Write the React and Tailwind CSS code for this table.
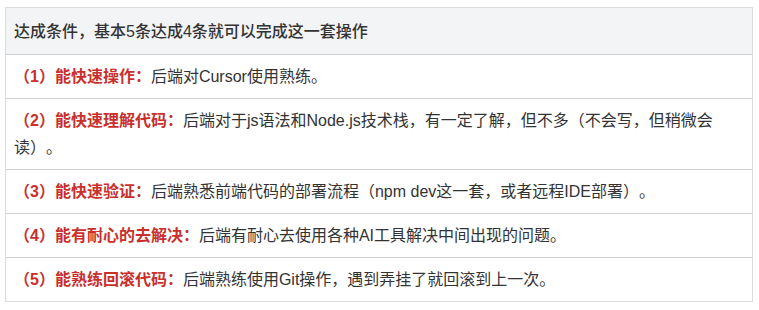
import React from 'react';

const rows = [
  { label: '（1）能快速操作：', text: '后端对Cursor使用熟练。' },
  { label: '（2）能快速理解代码：', text: '后端对于js语法和Node.js技术栈，有一定了解，但不多（不会写，但稍微会读）。' },
  { label: '（3）能快速验证：', text: '后端熟悉前端代码的部署流程（npm dev这一套，或者远程IDE部署）。' },
  { label: '（4）能有耐心的去解决：', text: '后端有耐心去使用各种AI工具解决中间出现的问题。' },
  { label: '（5）能熟练回滚代码：', text: '后端熟练使用Git操作，遇到弄挂了就回滚到上一次。' },
];

export default function App() {
  return (
    <div
      className="w-[759px] h-[310px] bg-white pt-[7px] pl-[5px] [text-spacing-trim:space-all]"
      style={{ fontFamily: '"Liberation Sans", "Noto Sans CJK SC", sans-serif' }}
    >
      <div className="w-[748px] border border-[#dcdcdc] text-[16px] text-[#333]">
        {/* Header */}
        <div className="bg-[#f3f4f6] pl-[8px] pr-[8px] pt-[10px] pb-[9px] leading-[27px] font-medium">
          达成条件，基本5条达成4条就可以完成这一套操作
        </div>

        {/* Rows */}
        {rows.map((row, i) => (
          <div key={i} className="border-t border-[#cfcfcf] pl-[8px] pr-[20px] py-2 leading-[27px]">
            <span className="font-bold text-[#c9302c]">{row.label}</span>
            <span>{row.text}</span>
          </div>
        ))}
      </div>
    </div>
  );
}
